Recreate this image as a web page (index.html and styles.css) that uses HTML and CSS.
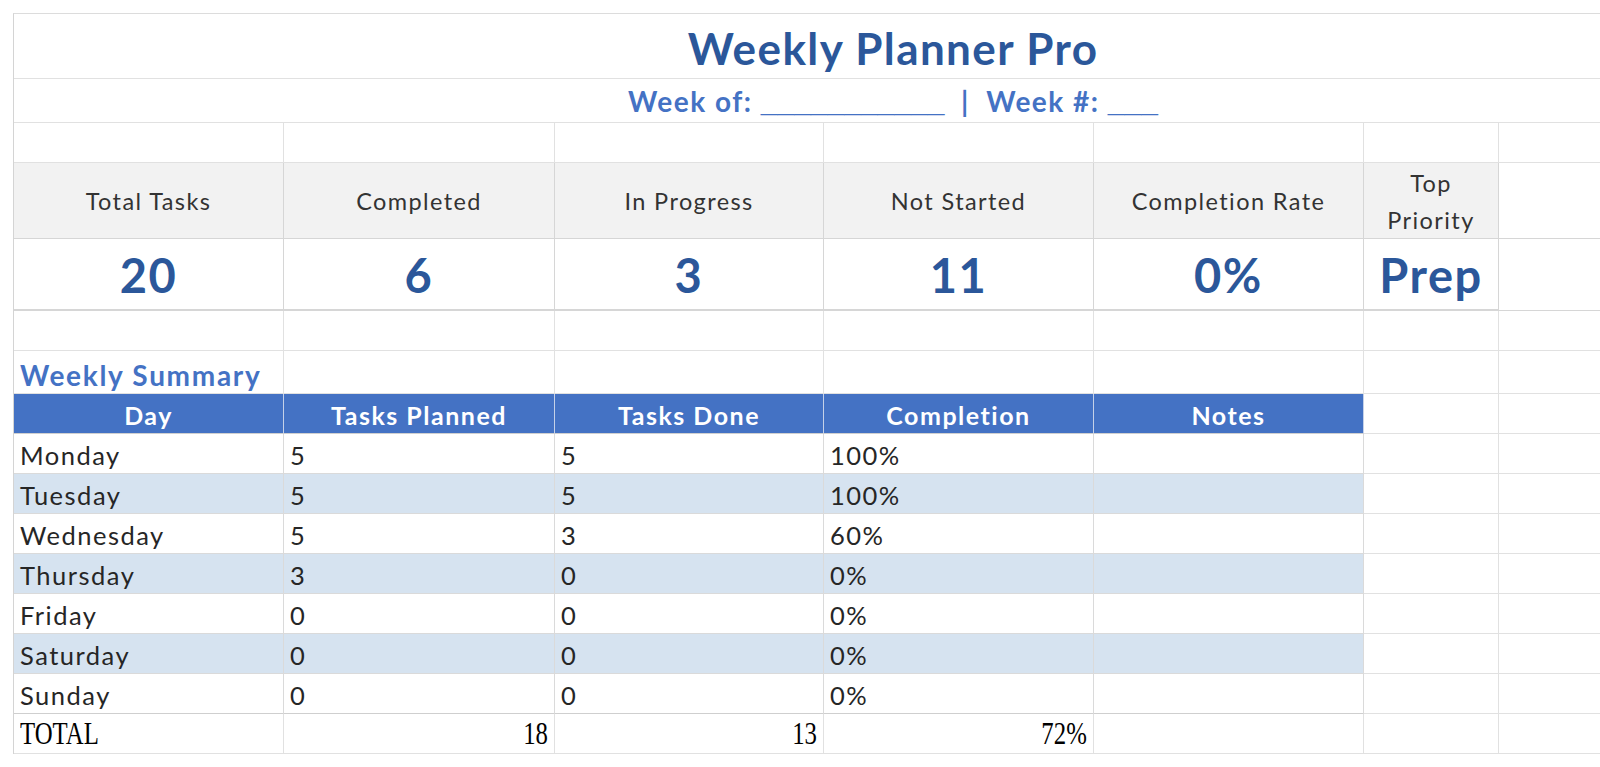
FILE: index.html
```html
<!DOCTYPE html>
<html lang="en">
<head>
<meta charset="utf-8">
<title>Weekly Planner Pro</title>
<link rel="stylesheet" href="styles.css">
</head>
<body>
<div class="sheet">
  <div class="cell span-all title-row"><span class="title">Weekly Planner Pro</span></div>
  <div class="cell span-all week-row"><span class="week">Week of: <span class="blank">___________</span>  |  Week #: <span class="blank">___</span></span></div>

  <div class="cell"></div><div class="cell"></div><div class="cell"></div><div class="cell"></div><div class="cell"></div><div class="cell"></div><div class="cell end"></div>

  <div class="cell kpi-label">Total Tasks</div>
  <div class="cell kpi-label">Completed</div>
  <div class="cell kpi-label">In Progress</div>
  <div class="cell kpi-label">Not Started</div>
  <div class="cell kpi-label">Completion Rate</div>
  <div class="cell kpi-label narrow">Top<br>Priority</div>
  <div class="cell kpi-blank end"></div>

  <div class="cell kpi-value">20</div>
  <div class="cell kpi-value">6</div>
  <div class="cell kpi-value">3</div>
  <div class="cell kpi-value">11</div>
  <div class="cell kpi-value">0%</div>
  <div class="cell kpi-value">Prep</div>
  <div class="cell kpi-blank end"></div>

  <div class="cell"></div><div class="cell"></div><div class="cell"></div><div class="cell"></div><div class="cell"></div><div class="cell"></div><div class="cell end"></div>

  <div class="cell section"><span class="section-title">Weekly Summary</span></div>
  <div class="cell"></div><div class="cell"></div><div class="cell"></div><div class="cell"></div><div class="cell"></div><div class="cell end"></div>

  <div class="cell th">Day</div>
  <div class="cell th">Tasks Planned</div>
  <div class="cell th">Tasks Done</div>
  <div class="cell th">Completion</div>
  <div class="cell th">Notes</div>
  <div class="cell"></div><div class="cell end"></div>

  <div class="cell td">Monday</div><div class="cell td">5</div><div class="cell td">5</div><div class="cell td">100%</div><div class="cell td"></div><div class="cell"></div><div class="cell end"></div>
  <div class="cell td alt">Tuesday</div><div class="cell td alt">5</div><div class="cell td alt">5</div><div class="cell td alt">100%</div><div class="cell td alt"></div><div class="cell"></div><div class="cell end"></div>
  <div class="cell td">Wednesday</div><div class="cell td">5</div><div class="cell td">3</div><div class="cell td">60%</div><div class="cell td"></div><div class="cell"></div><div class="cell end"></div>
  <div class="cell td alt">Thursday</div><div class="cell td alt">3</div><div class="cell td alt">0</div><div class="cell td alt">0%</div><div class="cell td alt"></div><div class="cell"></div><div class="cell end"></div>
  <div class="cell td">Friday</div><div class="cell td">0</div><div class="cell td">0</div><div class="cell td">0%</div><div class="cell td"></div><div class="cell"></div><div class="cell end"></div>
  <div class="cell td alt">Saturday</div><div class="cell td alt">0</div><div class="cell td alt">0</div><div class="cell td alt">0%</div><div class="cell td alt"></div><div class="cell"></div><div class="cell end"></div>
  <div class="cell td">Sunday</div><div class="cell td">0</div><div class="cell td">0</div><div class="cell td">0%</div><div class="cell td"></div><div class="cell"></div><div class="cell end"></div>

  <div class="cell total"><span class="serif">TOTAL</span></div>
  <div class="cell total num"><span class="serif">18</span></div>
  <div class="cell total num"><span class="serif">13</span></div>
  <div class="cell total num"><span class="serif">72%</span></div>
  <div class="cell total"></div>
  <div class="cell"></div><div class="cell end"></div>
</div>
</body>
</html>
```

FILE: styles.css
```css
html, body {
  margin: 0;
  padding: 0;
  background: #ffffff;
}

body {
  width: 1600px;
  height: 767px;
  overflow: hidden;
  font-family: Lato, "Liberation Sans", sans-serif;
  color: #262626;
}

.sheet {
  margin: 13px 0 0 13px;
  display: grid;
  grid-template-columns: 270px 271px 269px 270px 270px 135px 102px;
  grid-template-rows: 65px 44px 40px 76px 72px 40px 43px 40px repeat(8, 40px);
  border-top: 1px solid #dcdcdc;
  border-left: 1px solid #d4d4d4;
  width: 1587px;
}

.cell {
  box-sizing: border-box;
  border-right: 1px solid #e1e1e1;
  border-bottom: 1px solid #e1e1e1;
  display: flex;
  min-width: 0;
  white-space: nowrap;
}

.cell.end {
  border-right: none;
}

.span-all {
  grid-column: 1 / -1;
  border-right: none;
  justify-content: center;
  padding-left: 171px;
}

.title-row {
  align-items: center;
}

.title {
  font-weight: 700;
  font-size: 44px;
  letter-spacing: 1.4px;
  color: #2b579a;
  padding-top: 3px;
}

.week-row {
  align-items: flex-end;
  padding-bottom: 3px;
}

.week {
  font-weight: 700;
  font-size: 28px;
  letter-spacing: 1.5px;
  color: #4472c4;
  white-space: pre;
}

.blank {
  font-family: "Liberation Sans", Arial, sans-serif;
  font-size: 30px;
  letter-spacing: 0;
}

.kpi-label {
  background: #f2f2f2;
  border-color: #d6d6d6;
  justify-content: center;
  align-items: center;
  font-size: 23.5px;
  letter-spacing: 1.4px;
  color: #333333;
  padding-top: 2px;
  text-align: center;
  line-height: 37px;
}

.kpi-blank {
  border-bottom-color: #d6d6d6;
}

.kpi-value {
  border-color: #d6d6d6;
  border-bottom-width: 2px;
  justify-content: center;
  align-items: center;
  font-weight: 700;
  font-size: 47px;
  letter-spacing: 1.5px;
  color: #2b579a;
  padding-top: 2px;
}

.section {
  align-items: flex-end;
}

.section-title {
  padding-left: 6px;
  padding-bottom: 1px;
  font-weight: 700;
  font-size: 28px;
  letter-spacing: 1.7px;
  color: #4472c4;
}

.th {
  background: #4472c4;
  color: #ffffff;
  font-weight: 700;
  font-size: 25px;
  letter-spacing: 1.5px;
  justify-content: center;
  align-items: center;
  border-right-color: #c5d1e8;
  border-bottom-color: #d0d0d0;
  padding-top: 2px;
}

.td {
  font-size: 25.5px;
  letter-spacing: 1.5px;
  color: #262626;
  align-items: flex-end;
  padding: 0 6px 3px;
  border-color: #dadada;
}

.td.alt {
  background: #d6e3f0;
}

.total {
  align-items: flex-end;
  padding: 0 6px 2px;
  border-top: 1px solid #cfcfcf;
  margin-top: -1px;
}

.total.num {
  justify-content: flex-end;
}

.serif {
  display: inline-block;
  font-family: "Liberation Serif", "Times New Roman", serif;
  font-size: 31px;
  line-height: 34px;
  color: #000000;
  transform: scaleX(0.8);
  transform-origin: left bottom;
}

.total.num .serif {
  transform-origin: right bottom;
}
```
